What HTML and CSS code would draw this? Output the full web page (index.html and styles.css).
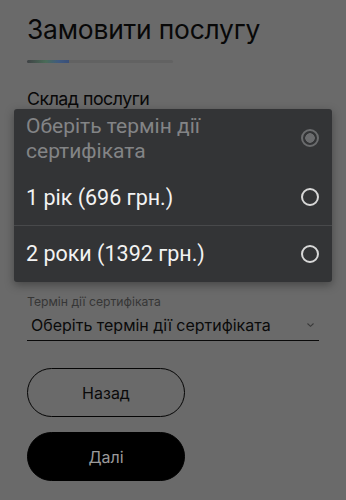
FILE: index.html
```html
<!DOCTYPE html>
<html lang="uk">
<head>
<meta charset="utf-8">
<link rel="stylesheet" href="styles.css">
</head>
<body>
<main class="page">
  <h1 class="title">Замовити послугу</h1>
  <div class="progress"><div class="progress-fill"></div></div>
  <h2 class="section">Склад послуги</h2>
  <div class="spacer"></div>
  <div class="field">
    <div class="field-label">Термін дії сертифіката</div>
    <div class="field-select">
      <span>Оберіть термін дії сертифіката</span>
      <svg class="chev" width="9" height="6" viewBox="0 0 9 6"><path d="M1.5 1.5 L4.5 4.3 L7.5 1.5" fill="none" stroke="#3a3a3a" stroke-width="1.1"/></svg>
    </div>
  </div>
  <div class="buttons">
    <button class="btn btn-outline">Назад</button>
    <button class="btn btn-solid">Далі</button>
  </div>
</main>
<div class="dialog">
  <div class="dialog-head">
    <div class="dialog-title">Оберіть термін дії сертифіката</div>
    <span class="radio radio-disabled"></span>
  </div>
  <div class="option">
    <span class="option-text">1 рік (696 грн.)</span>
    <span class="radio"></span>
  </div>
  <div class="option option-sep">
    <span class="option-text">2 роки (1392 грн.)</span>
    <span class="radio"></span>
  </div>
</div>
</body>
</html>
```
FILE: styles.css
```css
html, body {
  margin: 0;
  padding: 0;
}
body {
  background: #6a6a6a;
  width: 346px;
  height: 500px;
  overflow: hidden;
  position: relative;
  font-family: "Inter", "Liberation Sans", sans-serif;
}
.page {
  padding: 14px 27px 0 27px;
  display: flex;
  flex-direction: column;
}
.title {
  margin: 0;
  font-size: 26.4px;
  font-weight: 400;
  line-height: 31px;
  color: #080808;
  letter-spacing: -0.2px;
}
.progress {
  margin-top: 15px;
  width: 146px;
  height: 3px;
  background: #626262;
  border-radius: 2px;
  overflow: hidden;
}
.progress-fill {
  width: 42px;
  height: 100%;
  background: linear-gradient(90deg, #3f4245 0%, #4a6c58 45%, #3f5a80 75%, #3a4f78 100%);
}
.section {
  margin: 24px 0 0 0;
  font-size: 17.8px;
  font-weight: 400;
  line-height: 23px;
  letter-spacing: -0.5px;
  color: #080808;
}
.spacer {
  height: 184px;
}
.field {
  display: flex;
  flex-direction: column;
  width: 292px;
}
.field-label {
  font-size: 12.2px;
  line-height: 15px;
  color: #363636;
}
.field-select {
  display: flex;
  align-items: center;
  justify-content: space-between;
  padding: 6px 4px 5px 4px;
  border-bottom: 1.5px solid #0a0a0a;
  font-size: 16px;
  line-height: 20px;
  color: #0a0a0a;
}
.chev {
  margin-right: 0;
}
.buttons {
  margin-top: 27px;
  display: flex;
  flex-direction: column;
  gap: 15px;
}
.btn {
  width: 158px;
  height: 49px;
  border-radius: 25px;
  font-family: "Inter", "Liberation Sans", sans-serif;
  font-size: 16px;
  padding: 0;
  cursor: pointer;
}
.btn-outline {
  background: transparent;
  border: 1.5px solid #050505;
  color: #0a0a0a;
}
.btn-solid {
  background: #000;
  border: 1.5px solid #000;
  color: #9a9a9a;
}
.dialog {
  position: absolute;
  left: 14px;
  top: 109px;
  width: 318px;
  background: #333436;
  border-radius: 3px;
  box-shadow: 0 3px 10px rgba(0, 0, 0, 0.35);
  font-family: "Roboto", "Noto Sans", sans-serif;
}
.dialog-head {
  display: flex;
  align-items: center;
  justify-content: space-between;
  padding: 3px 12px 0 12px;
  height: 57px;
}
.dialog-title {
  width: 240px;
  font-size: 21px;
  line-height: 25px;
  color: #838486;
  margin-top: -4px;
}
.option {
  display: flex;
  align-items: center;
  justify-content: space-between;
  padding: 0 12px;
  height: 56px;
}
.option-sep {
  border-top: 1px solid #48494b;
  height: 57px;
  padding-bottom: 1px;
  box-sizing: border-box;
}
.option-text {
  font-size: 21.5px;
  color: #f2f2f2;
}
.radio {
  width: 14px;
  height: 14px;
  border: 2px solid #d8d8d8;
  border-radius: 50%;
  box-sizing: content-box;
  margin-right: 1px;
}
.radio-disabled {
  border-color: #6b6c6e;
  background: radial-gradient(circle, #6b6c6e 0 4.5px, transparent 5px);
  margin-top: -6px;
}
```
